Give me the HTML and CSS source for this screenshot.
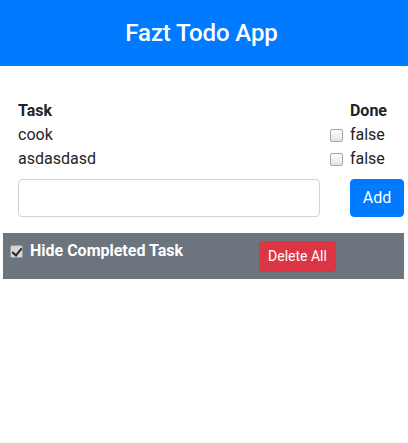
FILE: index.html
```html
<!DOCTYPE html>
<html>
<head>
<meta charset="utf-8">
<link rel="stylesheet" href="styles.css">
</head>
<body>
<header class="navbar"><h1 class="brand">Fazt Todo App</h1></header>
<main class="content">
  <table class="tasks">
    <thead>
      <tr><th class="col-task">Task</th><th class="col-done">Done</th></tr>
    </thead>
    <tbody>
      <tr><td>cook</td><td class="col-done"><input type="checkbox" class="cb"> false</td></tr>
      <tr><td>asdasdasd</td><td class="col-done"><input type="checkbox" class="cb"> false</td></tr>
    </tbody>
  </table>
  <form class="add-form">
    <input type="text" class="text-input">
    <button type="button" class="btn btn-primary">Add</button>
  </form>
</main>
<section class="toolbar">
  <label class="hide-label"><input type="checkbox" class="cb cb-checked" checked> Hide Completed Task</label>
  <button type="button" class="btn btn-danger btn-sm">Delete All</button>
</section>
</body>
</html>
```
FILE: styles.css
```css
* { box-sizing: border-box; }
html, body { margin: 0; padding: 0; }
body {
  font-family: Roboto, "Liberation Sans", sans-serif;
  font-size: 16px;
  line-height: 24px;
  color: #212529;
  background: #fff;
}
.navbar {
  background: #007bff;
  height: 66px;
  padding-right: 5px;
  display: flex;
  align-items: center;
  justify-content: center;
}
.brand {
  margin: 0;
  color: #fff;
  font-size: 24px;
  font-weight: 500;
  line-height: 28px;
  letter-spacing: -0.1px;
}
.content {
  padding: 33px 4px 0 18px;
}
.tasks {
  border-collapse: collapse;
  width: 369px;
}
.tasks th, .tasks td {
  padding: 0;
  height: 24px;
  text-align: left;
  vertical-align: middle;
}
.tasks th { font-weight: 700; }
.col-done { width: 36px; }
.tasks td.col-done { white-space: nowrap; }
.cb {
  -webkit-appearance: none;
  appearance: none;
  width: 13px;
  height: 13px;
  margin: 0 3px 0 4px;
  border: 1px solid #a6a6a6;
  border-radius: 2px;
  background: linear-gradient(#fdfdfd, #e4e4e4);
  vertical-align: -2px;
}
.tasks .cb { margin-left: -20px; }
.cb-checked {
  background: #d6d6d6;
  border-color: #9a9a9a;
  position: relative;
}
.cb-checked::after {
  content: "";
  position: absolute;
  left: 3px;
  top: 0px;
  width: 4px;
  height: 8px;
  border: solid #2a2a2a;
  border-width: 0 2px 2px 0;
  transform: rotate(40deg);
}
.add-form {
  display: flex;
  justify-content: space-between;
  margin: 8px 0 0;
}
.text-input {
  width: 302px;
  height: 38px;
  border: 1px solid #ced4da;
  border-radius: 4px;
  padding: 6px 12px;
  font: inherit;
}
.btn {
  font-family: Roboto, "Liberation Sans", sans-serif;
  border: 1px solid transparent;
  border-radius: 4px;
  color: #fff;
  font-size: 16px;
  line-height: 24px;
  padding: 6px 11px;
  height: 38px;
}
.btn-primary { background: #007bff; border-color: #007bff; width: 54px; padding: 6px 0; }
.btn-danger { background: #dc3545; border-color: #dc3545; }
.btn-sm {
  font-size: 14px;
  line-height: 21px;
  padding: 4px 8px;
  height: 31px;
  width: 77px;
  margin-top: 2px;
}
.toolbar {
  margin: 16px 4px 0 3px;
  background: #6c757d;
  height: 46px;
  padding: 6px 0 0 3px;
  display: grid;
  grid-template-columns: 253px auto;
  align-items: start;
}
.hide-label {
  color: #fff;
  font-weight: 700;
  white-space: nowrap;
}
.hide-label .cb { margin: 0 3px 0 4px; }
```
